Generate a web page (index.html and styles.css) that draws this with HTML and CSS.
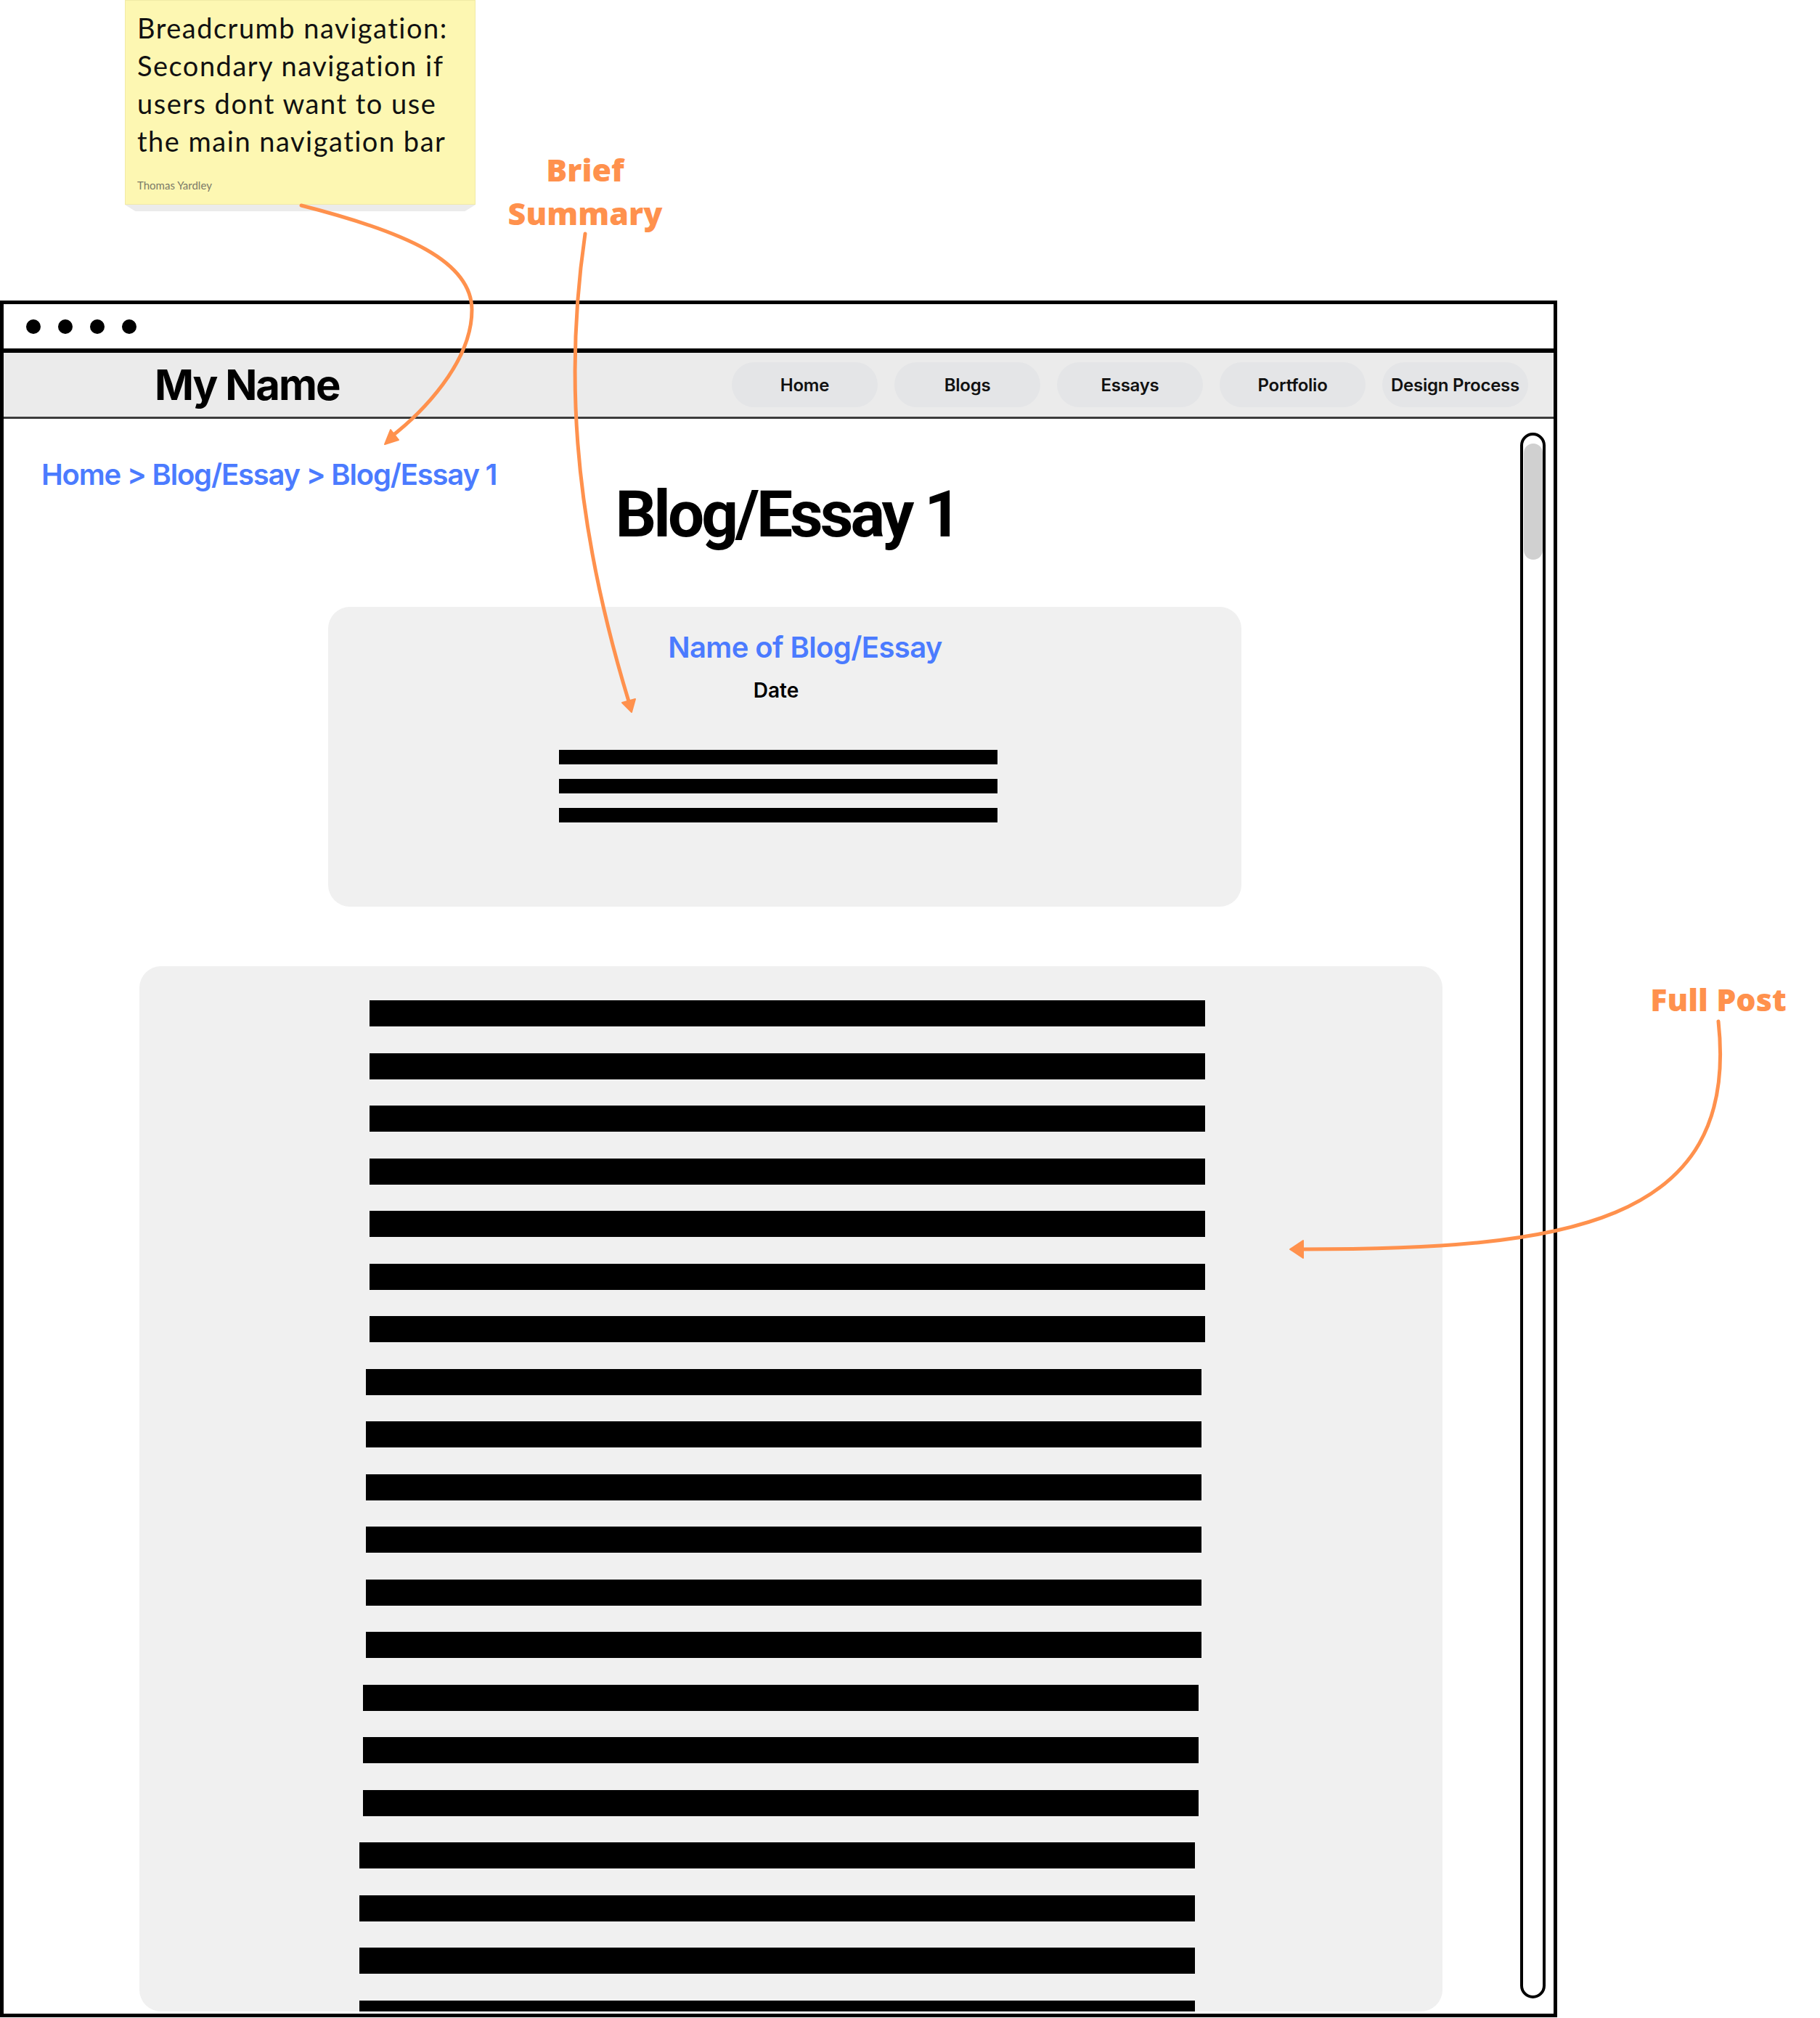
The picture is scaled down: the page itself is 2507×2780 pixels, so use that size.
FILE: index.html
```html
<!DOCTYPE html>
<html lang="en">
<head>
<meta charset="utf-8">
<title>Blog/Essay 1 wireframe</title>
<link rel="stylesheet" href="styles.css">
</head>
<body>
<div class="canvas">
  <div class="note">
    <p class="note-text">Breadcrumb navigation:<br>Secondary navigation if<br>users dont want to use<br>the main navigation bar</p>
    <p class="note-author">Thomas Yardley</p>
  </div>

  <div class="label label-brief">Brief<br>Summary</div>
  <div class="label label-full">Full Post</div>

  <div class="window">
    <div class="titlebar">
      <span class="dot"></span><span class="dot"></span><span class="dot"></span><span class="dot"></span>
    </div>
    <nav class="navbar">
      <div class="brand">My Name</div>
      <ul class="links">
        <li class="pill">Home</li>
        <li class="pill">Blogs</li>
        <li class="pill">Essays</li>
        <li class="pill">Portfolio</li>
        <li class="pill">Design Process</li>
      </ul>
    </nav>
    <div class="viewport">
      <main class="page">
        <div class="head">
          <div class="crumbs">Home &gt; Blog/Essay &gt; Blog/Essay 1</div>
          <h1 class="title">Blog/Essay 1</h1>
        </div>
        <section class="summary">
          <h2 class="post-name">Name of Blog/Essay</h2>
          <div class="post-date">Date</div>
          <div class="summary-lines">
            <span class="line"></span><span class="line"></span><span class="line"></span>
          </div>
        </section>
        <section class="post">
          <span class="bar"></span><span class="bar"></span><span class="bar"></span><span class="bar"></span>
          <span class="bar"></span><span class="bar"></span><span class="bar"></span>
          <span class="bar shift-1"></span><span class="bar shift-1"></span><span class="bar shift-1"></span>
          <span class="bar shift-1"></span><span class="bar shift-1"></span><span class="bar shift-1"></span>
          <span class="bar shift-2"></span><span class="bar shift-2"></span><span class="bar shift-2"></span>
          <span class="bar shift-3"></span><span class="bar shift-3"></span><span class="bar shift-3"></span>
          <span class="bar shift-3"></span>
        </section>
      </main>
      <div class="scrollbar"><div class="thumb"></div></div>
    </div>
  </div>

  <svg class="arrows" width="2507" height="2780" viewBox="0 0 2507 2780" aria-hidden="true">
    <g fill="none" stroke="#ff914d" stroke-width="5" stroke-linecap="round">
      <path d="M415,283 C560,320 650,360 650,427 C650,500 580,570 537,603"/>
      <path d="M806,322 C780,500 785,700 866,966"/>
      <path d="M2367,1407 C2398,1690 2150,1721 1792,1721"/>
    </g>
    <g fill="#ff914d" stroke="#ff914d" stroke-width="2" stroke-linejoin="round">
      <polygon points="530,612 549,606 538,592"/>
      <polygon points="870,981 875,963 857,968"/>
      <polygon points="1777,1721 1795,1709 1795,1733"/>
    </g>
  </svg>
</div>
</body>
</html>
```

FILE: styles.css
```css
* { box-sizing: border-box; }

html, body {
  margin: 0;
  padding: 0;
  background: #ffffff;
}

body {
  font-family: "Inter", "Liberation Sans", sans-serif;
  color: #000;
}

.canvas {
  position: relative;
  width: 2507px;
  height: 2780px;
  overflow: hidden;
}

/* ---------- sticky note ---------- */
.note {
  position: absolute;
  left: 172px;
  top: 0;
  width: 483px;
  height: 282px;
  background: #fdf7b2;
  border: 1px solid #f1eba6;
  padding: 11px 0 0 16px;
  font-family: "Lato", "Liberation Sans", sans-serif;
}
.note::after {
  content: "";
  position: absolute;
  left: -1px;
  right: -1px;
  top: 281px;
  height: 9px;
  background: #ebebeb;
  clip-path: polygon(0 0, 100% 0, 97% 100%, 3% 100%);
}
.note-text {
  margin: 0;
  font-size: 38px;
  line-height: 52px;
  letter-spacing: 1.5px;
  color: #111;
}
.note-author {
  margin: 26px 0 0;
  font-size: 15px;
  line-height: 18px;
  color: #7b7a68;
}

/* ---------- annotation labels ---------- */
.label {
  position: absolute;
  width: 220px;
  text-align: center;
  font-family: "Open Sans", "Liberation Sans", sans-serif;
  font-weight: 800;
  font-size: 43px;
  line-height: 60px;
  color: #ff914d;
}
.label-brief { left: 696px; top: 204px; }
.label-full { left: 2257px; top: 1347px; }

/* ---------- browser window ---------- */
.window {
  margin-top: 414px;
  width: 2145px;
  height: 2365px;
  border: 5px solid #000;
  display: flex;
  flex-direction: column;
}

.titlebar {
  height: 67px;
  flex: none;
  border-bottom: 6px solid #000;
  display: flex;
  align-items: center;
  gap: 24px;
  padding-left: 31px;
}
.dot {
  width: 20px;
  height: 20px;
  border-radius: 50%;
  background: #000;
}

.navbar {
  height: 91px;
  flex: none;
  background: #ebebeb;
  border-bottom: 3px solid #3c3c3c;
  display: flex;
  align-items: center;
  padding-left: 208px;
  padding-right: 35px;
}
.brand {
  font-size: 58px;
  font-weight: 700;
  letter-spacing: -0.035em;
  line-height: 1;
}
.links {
  list-style: none;
  margin: 0 0 0 auto;
  padding: 0;
  display: flex;
  gap: 23px;
}
.pill {
  width: 201px;
  height: 62px;
  border-radius: 31px;
  background: #e4e5e7;
  display: flex;
  align-items: center;
  justify-content: center;
  font-size: 24px;
  font-weight: 600;
  letter-spacing: -0.01em;
  color: #111;
}

/* ---------- viewport ---------- */
.viewport {
  flex: 1;
  display: flex;
  min-height: 0;
  overflow: hidden;
}
.page {
  flex: 1;
  min-width: 0;
  overflow: hidden;
  padding-top: 54px;
}

.head {
  display: grid;
  grid-template-columns: 447px 1258px;
  align-items: start;
}
.crumbs {
  grid-row: 1;
  grid-column: 1 / 3;
  justify-self: start;
  margin-left: 52px;
  font-size: 40px;
  font-weight: 600;
  line-height: 46px;
  letter-spacing: -0.03em;
  color: #4b7bff;
  white-space: nowrap;
}
.title {
  grid-row: 1;
  grid-column: 2;
  justify-self: center;
  margin: 28px 0 0 6px;
  font-family: "Roboto", "Liberation Sans", sans-serif;
  font-size: 89px;
  font-weight: 700;
  line-height: 100px;
  letter-spacing: -0.045em;
}

.summary {
  margin: 77px 0 0 447px;
  width: 1258px;
  height: 413px;
  border-radius: 30px;
  background: #f0f0f0;
  padding-top: 32px;
}
.post-name {
  margin: 0;
  padding-left: 56px;
  text-align: center;
  font-size: 40px;
  font-weight: 600;
  line-height: 48px;
  letter-spacing: -0.015em;
  color: #4b7bff;
}
.post-date {
  margin-top: 18px;
  padding-right: 24px;
  text-align: center;
  font-size: 28px;
  font-weight: 600;
  line-height: 34px;
}
.summary-lines {
  margin: 65px 0 0 318px;
  width: 604px;
  display: flex;
  flex-direction: column;
  gap: 20px;
}
.line {
  display: block;
  height: 20px;
  background: #000;
}

.post {
  margin: 82px 0 0 187px;
  width: 1795px;
  height: 1440px;
  border-radius: 30px;
  background: #f0f0f0;
  padding-top: 47px;
  overflow: hidden;
  display: flex;
  flex-direction: column;
  gap: 36.5px;
}
.bar {
  display: block;
  flex: none;
  width: 1151px;
  height: 36px;
  margin-left: 317px;
  background: #000;
}
.bar.shift-1 { margin-left: 312px; }
.bar.shift-2 { margin-left: 308px; }
.bar.shift-3 { margin-left: 303px; }

.scrollbar {
  flex: none;
  width: 35px;
  margin: 19px 11px 21px 0;
  border: 4px solid #000;
  border-radius: 18px;
  padding-top: 11px;
}
.thumb {
  width: 26px;
  height: 160px;
  margin-left: 1px;
  border-radius: 13px;
  background: #d0d0d0;
}

/* ---------- annotation arrows ---------- */
.arrows {
  position: absolute;
  left: 0;
  top: 0;
  pointer-events: none;
}
```
